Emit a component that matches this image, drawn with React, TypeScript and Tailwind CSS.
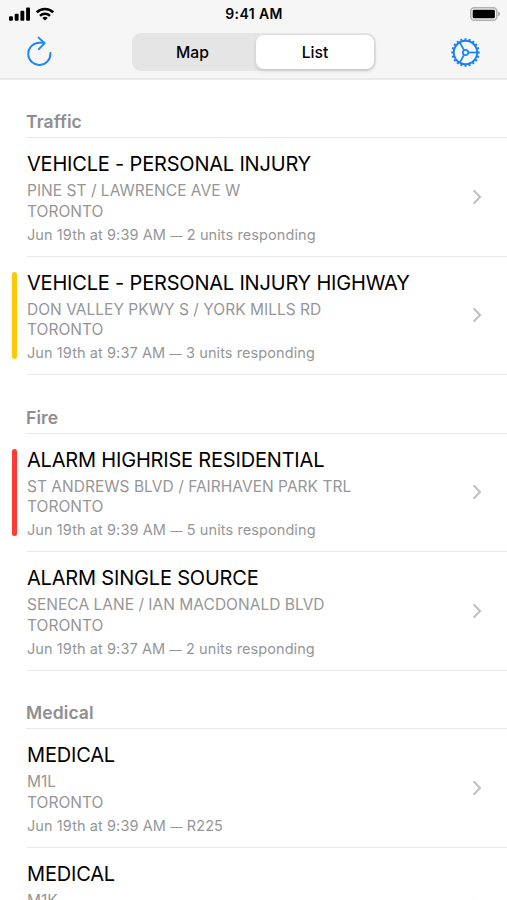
interface Incident {
  id: string;
  title: string;
  street: string;
  city: string;
  time: string;
  units: string;
  severity?: 'moderate' | 'severe';
}

interface IncidentGroup {
  name: string;
  incidents: Incident[];
}

const GROUPS: IncidentGroup[] = [
  {
    name: 'Traffic',
    incidents: [
      {
        id: 't1',
        title: 'VEHICLE - PERSONAL INJURY',
        street: 'PINE ST / LAWRENCE AVE W',
        city: 'TORONTO',
        time: 'Jun 19th at 9:39 AM',
        units: '2 units responding',
      },
      {
        id: 't2',
        title: 'VEHICLE - PERSONAL INJURY HIGHWAY',
        street: 'DON VALLEY PKWY S / YORK MILLS RD',
        city: 'TORONTO',
        time: 'Jun 19th at 9:37 AM',
        units: '3 units responding',
        severity: 'moderate',
      },
    ],
  },
  {
    name: 'Fire',
    incidents: [
      {
        id: 'f1',
        title: 'ALARM HIGHRISE RESIDENTIAL',
        street: 'ST ANDREWS BLVD / FAIRHAVEN PARK TRL',
        city: 'TORONTO',
        time: 'Jun 19th at 9:39 AM',
        units: '5 units responding',
        severity: 'severe',
      },
      {
        id: 'f2',
        title: 'ALARM SINGLE SOURCE',
        street: 'SENECA LANE / IAN MACDONALD BLVD',
        city: 'TORONTO',
        time: 'Jun 19th at 9:37 AM',
        units: '2 units responding',
      },
    ],
  },
  {
    name: 'Medical',
    incidents: [
      {
        id: 'm1',
        title: 'MEDICAL',
        street: 'M1L',
        city: 'TORONTO',
        time: 'Jun 19th at 9:39 AM',
        units: 'R225',
      },
      {
        id: 'm2',
        title: 'MEDICAL',
        street: 'M1K',
        city: '',
        time: '',
        units: '',
      },
    ],
  },
];

export default function App(): React.ReactElement {
  return (
    <div className="flex h-[900px] w-full flex-col overflow-hidden bg-white font-['Inter',sans-serif] text-black">
      <header className="h-[79.5px] shrink-0 border-b-2 border-[#e9e9e9] bg-[#f6f6f6]">
        <StatusBar />
        <NavBar />
      </header>
      <main>
        {GROUPS.map((group) => (
          <section key={group.name}>
            <h2 className="ml-[26px] flex h-[58.6px] items-end border-b border-[#e9e9eb] pb-[4.8px] text-[17.5px] leading-5 font-semibold tracking-[0.1px] text-[#8e8e90]">
              {group.name}
            </h2>
            {group.incidents.map((incident) => (
              <IncidentRow key={incident.id} incident={incident} />
            ))}
          </section>
        ))}
      </main>
    </div>
  );
}

function StatusBar(): React.ReactElement {
  return (
    <div className="grid h-7 grid-cols-[1fr_auto_1fr] items-center">
      <div className="-mt-px flex items-center gap-[5px] pl-[9px]">
        <svg width="22" height="14" viewBox="0 0 22 14" fill="#000">
          <rect x="0" y="9.3" width="3.9" height="4.4" rx="1" />
          <rect x="5.7" y="6.7" width="3.9" height="7" rx="1" />
          <rect x="11.4" y="3.7" width="3.9" height="10" rx="1" />
          <rect x="17.1" y="0.6" width="3.9" height="13.1" rx="1" />
        </svg>
        <svg width="18" height="14" viewBox="0 0 18 14" fill="none" stroke="#000">
          <path d="M0.8 5.3a11.8 11.8 0 0 1 16.4 0" strokeWidth="2.5" />
          <path d="M4 8.8a7.3 7.3 0 0 1 10 0" strokeWidth="2.4" />
          <path d="M9 13.6 L6.3 11.1a4 4 0 0 1 5.4 0Z" fill="#000" stroke="none" />
        </svg>
      </div>
      <span className="pl-[1px] text-[14px] leading-5 font-semibold tracking-[0.4px]">9:41 AM</span>
      <div className="-mt-px flex justify-end pr-[6px]">
        <svg width="31" height="14" viewBox="0 0 31 14">
          <rect x="0.8" y="0.8" width="26" height="12.4" rx="3.4" fill="#f6f6f6" stroke="#b0b0b0" strokeWidth="1.5" />
          <rect x="2.7" y="2.7" width="22.2" height="8.6" rx="1.4" fill="#000" />
          <path d="M28 4.6 Q30.8 6 30.2 7.2 Q29.8 8.6 28 9.4Z" fill="#b0b0b0" />
        </svg>
      </div>
    </div>
  );
}

function NavBar(): React.ReactElement {
  return (
    <nav className="flex h-12 items-center justify-between pr-[26px] pl-[26px]">
      <button aria-label="Refresh">
        <svg width="28" height="32" viewBox="0 0 28 32" fill="none" stroke="#1f86f8" strokeWidth="1.9" strokeLinecap="round" strokeLinejoin="round">
          <path d="M24.4 17A11.1 11.1 0 1 1 13.3 6.8H18.4" />
          <path d="M12.6 1.6 18.6 7.2 12.9 13.2" />
        </svg>
      </button>
      <div className="ml-[4px] flex h-[38px] w-[244px] rounded-[9px] bg-[#e5e5e6] p-[2px] text-[15.7px] leading-[21px] font-medium">
        <button className="flex-1 pt-[1px] pr-[5px]">Map</button>
        <button className="w-[118px] rounded-[8px] bg-white pt-[1px] shadow-[0_2px_4px_rgba(0,0,0,0.14)]">List</button>
      </div>
      <button aria-label="Settings">
        <GearIcon />
      </button>
    </nav>
  );
}

function GearIcon(): React.ReactElement {
  const teeth = Array.from({ length: 20 }, (_, i) => i * 18);
  return (
    <svg width="31" height="30" viewBox="-15.5 -15.5 31 30" fill="none" stroke="#1a80fb">
      <circle r="11.7" strokeWidth="1.9" />
      <circle r="2.7" strokeWidth="1.7" />
      {[0, 120, 240].map((angle) => (
        <path key={angle} d="M2.8 0H11.5" strokeWidth="1.7" transform={`rotate(${angle})`} />
      ))}
      {teeth.map((angle) => (
        <path key={angle} d="M12 0H14.2" strokeWidth="2.1" transform={`rotate(${angle})`} />
      ))}
    </svg>
  );
}

function IncidentRow({ incident }: { incident: Incident }): React.ReactElement {
  return (
    <div className="flex h-[118.5px]">
      <div className="w-[27px] shrink-0 pt-[15.4px] pl-3">
        {incident.severity === 'moderate' && <div className="h-[87px] w-[5px] rounded-full bg-[#fdc904]" />}
        {incident.severity === 'severe' && <div className="h-[87px] w-[5px] rounded-full bg-[#fd3b34]" />}
      </div>
      <div className="flex flex-1 items-center justify-between border-b border-[#e9e9eb] pr-[25px]">
        <div className="h-full pt-[14.2px] whitespace-nowrap">
          <h3 className="text-[20px] leading-6 tracking-[-0.19px]">{incident.title}</h3>
          <div className="mt-[4.9px] text-[15.5px] leading-[20.5px] tracking-[0.02px] text-[#969698]">
            <p>{incident.street}</p>
            <p>{incident.city}</p>
          </div>
          {incident.time && (
            <p className="mt-[2.4px] text-[14.5px] leading-5 tracking-[0.09px] text-[#969698]">
              {incident.time} <span className="text-[12.4px]">—</span> {incident.units}
            </p>
          )}
        </div>
        <svg width="10" height="16" viewBox="0 0 10 16" fill="none" stroke="#c2c2c5" strokeWidth="2.1">
          <path d="M1.6 1.3 8 8 1.6 14.7" />
        </svg>
      </div>
    </div>
  );
}
